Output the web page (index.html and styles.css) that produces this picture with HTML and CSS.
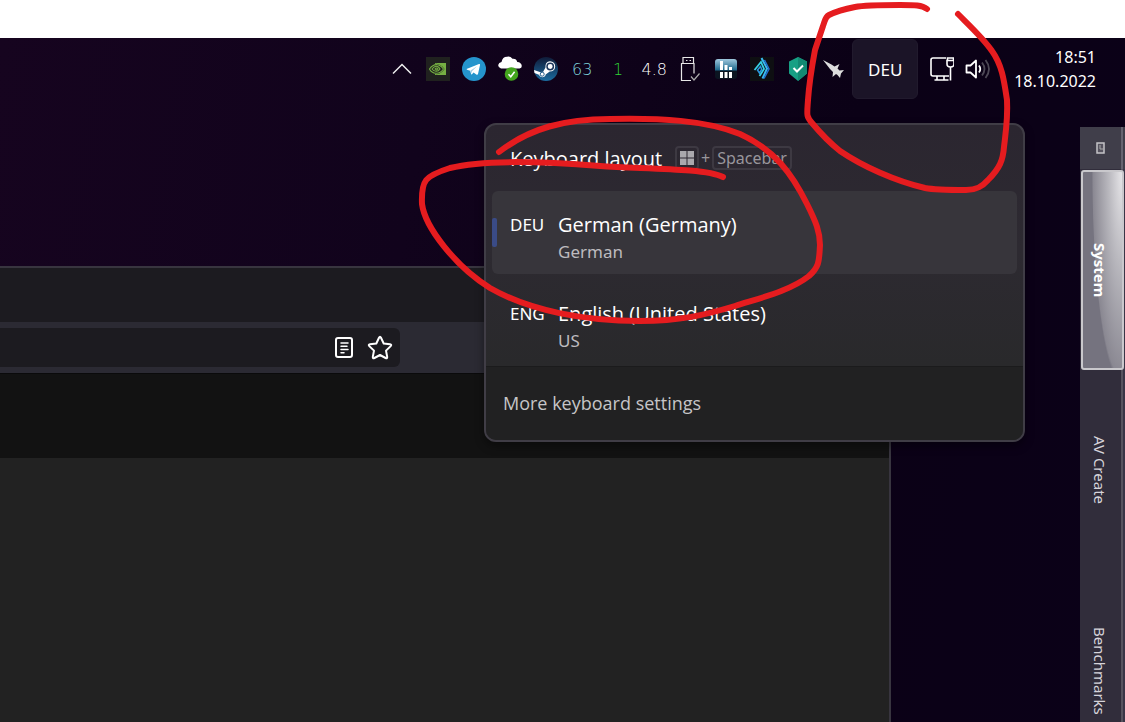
FILE: index.html
```html
<!DOCTYPE html>
<html lang="en">
<head>
  <meta charset="UTF-8" />
  <title>Keyboard layout</title>
  <link rel="stylesheet" href="styles.css">
</head>
<body>
  <main class="desktop">

    <!-- browser window -->
    <section class="window">
      <div class="titlebar"></div>
      <div class="toolbar">
        <div class="urlbar">
          <button class="url-btn" aria-label="Reader view">
            <svg width="24" height="24" viewBox="0 0 24 24" fill="none" stroke="#fff" stroke-width="2" stroke-linecap="round">
              <rect x="4" y="2" width="16" height="19" rx="2" />
              <path d="M9 7h7M9 10.300h6M9 13.500h7M9 16.700h3" stroke-width="1.500" />
            </svg>
          </button>
          <button class="url-btn" aria-label="Bookmark">
            <svg width="26" height="26" viewBox="0 0 26 26" fill="none" stroke="#fff" stroke-width="2" stroke-linejoin="round">
              <path d="M12 2.800q1-2 2 0l2.700 5.700 6.300.8q2 .4.700 1.800l-4.700 4.500 1.200 6.300q.2 2-1.600 1.100L13 20l-5.600 3q-1.800.9-1.600-1.100L7 15.600l-4.700-4.500Q1 9.700 3 9.300L9.300 8.500z" />
            </svg>
          </button>
        </div>
      </div>
      <div class="subheader"></div>
      <div class="content"></div>
    </section>

    <!-- system tray -->
    <header class="tray">
      <button class="tray-item" aria-label="Hidden icons">
        <svg width="20" height="12" viewBox="0 0 20 12" fill="none" stroke="#eee" stroke-width="1.500"><path d="M1 10.500L10 1.500l9 9" /></svg>
      </button>
      <button class="tray-item" aria-label="Nvidia">
        <svg width="24" height="24" viewBox="0 0 24 24">
          <rect width="24" height="24" fill="#20211f" />
          <path d="M9 6h11v12H9z" fill="#76b043" />
          <path d="M3 12q5-7 10-4.500 4 1.500 5.500 4.500-4 6-9 5Q5 16 3 12z" fill="#20211f" />
          <path d="M3.500 12q4-5.500 9-4 3 1 5 4-3 4.500-7.500 4.300Q5.500 16 3.500 12zM6 12q3-4 6-2.200 1.500 1 2 2.200-1.800 2.500-4 2.300Q7.500 14 6 12zM9 12q1.500-2 3 0-1.500 1.800-3 0z" fill="none" stroke="#76b043" stroke-width="1.100" />
        </svg>
      </button>
      <button class="tray-item" aria-label="Telegram">
        <svg width="24" height="24" viewBox="0 0 24 24">
          <circle cx="12" cy="12" r="12" fill="#2594cc" />
          <path d="M4.500 12L17 7q1.300-.4 1 1L16 17q-.4 1.300-1.700.5L11.500 15.500l-1.500 1.700q-.8.600-1-.5l-.8-3-3.200-.9z" fill="#fff" />
          <path d="M8.500 13.500L15 9.200l-5 5-.4 2.500z" fill="#a9cfe5" />
        </svg>
      </button>
      <button class="tray-item" aria-label="Cloud sync">
        <svg width="26" height="26" viewBox="0 0 26 26">
          <path d="M4 12.500q-3-.8-2.800-3.500.5-2.500 3.300-3Q5.500.8 10 .7q3.200-.8 5.500 2 4-.4 4.800 3.300 4 .3 4.500 4 0 2-2.300 2.500z" fill="#fff" />
          <circle cx="14.500" cy="18" r="6.800" fill="#43a51d" />
          <path d="M11.500 18.300l2.300 2.500 3.800-5" fill="none" stroke="#fff" stroke-width="1.500" />
        </svg>
      </button>
      <button class="tray-item" aria-label="Steam">
        <svg width="24" height="24" viewBox="0 0 24 24">
          <defs>
            <linearGradient id="steam" x1="0" y1="0" x2="0" y2="1">
              <stop offset="0" stop-color="#101b38" />
              <stop offset="1" stop-color="#1b6ca0" />
            </linearGradient>
          </defs>
          <circle cx="12" cy="12" r="12" fill="url(#steam)" />
          <path d="M0 13l6.500 2.200q1.200-.6 2.500-.2L11.500 10.500q-.5-5.800 4.500-6.200 5 .3 5.200 5.200-.4 5-5.500 5l-4 3q-.5 2.700-3.500 2.800-2.600-.2-3.300-2.500L.500 16z" fill="#fff" />
          <circle cx="16.200" cy="9.500" r="3.200" fill="#fff" stroke="#1b355b" stroke-width="1.500" />
          <circle cx="8.200" cy="17.200" r="2" fill="none" stroke="#205a8a" stroke-width="1" />
        </svg>
      </button>
      <span class="tray-item meter cyan">63</span>
      <span class="tray-item meter green">1</span>
      <span class="tray-item meter">4.8</span>
      <button class="tray-item" aria-label="Eject hardware">
        <svg width="20" height="26" viewBox="0 0 20 26" fill="none" stroke="#e8e8e8" stroke-width="1.200">
          <path d="M3 7.500V1.500h10.500v6M11 24.500H1.500v-17h12.500v10M6 4.500h1.500M9.500 4.500H11" />
          <path d="M11 20.500l3 3.500 5.500-6.500" stroke="#aaa" />
        </svg>
      </button>
      <button class="tray-item" aria-label="Resource monitor">
        <svg width="24" height="22" viewBox="0 0 24 22">
          <defs>
            <linearGradient id="mon" x1="0" y1="0" x2="0" y2="1">
              <stop offset="0" stop-color="#9fc8de" />
              <stop offset=".55" stop-color="#1f688c" />
              <stop offset=".6" stop-color="#0c1521" />
            </linearGradient>
          </defs>
          <rect x="1" y="1" width="22" height="20" rx="3" fill="url(#mon)" />
          <path d="M7.500 3v9M12 7v5M16.500 9v3" stroke="#fff" stroke-width="3" />
          <path d="M7.500 14v6M12 14v6M16.500 14v6" stroke="#fff" stroke-width="3" />
        </svg>
      </button>
      <button class="tray-item" aria-label="Armoury">
        <svg width="24" height="24" viewBox="0 0 24 24" fill="none">
          <rect width="24" height="24" fill="#0e0f12" />
          <path d="M11.500 1l5.500 10.500-4.500 10" stroke="#39b9ef" stroke-width="2" />
          <path d="M14.500 3l4.500 9-5 9.500" stroke="#236fd0" stroke-width="1.500" />
          <path d="M4.500 13L11 5l3 7-4.500 7" stroke="#36d0e4" stroke-width="1.800" />
          <path d="M7.500 13l3-3.500 1.200 3L9.500 16z" stroke="#2a96dc" stroke-width="1.500" />
        </svg>
      </button>
      <button class="tray-item" aria-label="Protection">
        <svg width="20" height="24" viewBox="0 0 20 24">
          <path d="M10 0l9 4.500v12L10 24l-9-7.500v-12z" fill="#17a084" />
          <path d="M10 0l9 4.500v12L10 24z" fill="#128a73" />
          <path d="M5.500 11l3.500 3.500L15 8.500" fill="none" stroke="#fff" stroke-width="2" />
        </svg>
      </button>
      <button class="tray-item" aria-label="Game">
        <svg width="22" height="20" viewBox="0 0 22 20">
          <path d="M0 1l8.500 4.500 3 2L16.500 5 14.500 9.500l2 2 4.500-.5-3 3.500-1 4.500-2.500-3-1.500-1-3.500 3 .5-5-3-3z" fill="#ddd" />
        </svg>
      </button>
      <button class="lang-btn">DEU</button>
      <button class="quick" aria-label="Network and volume">
        <svg width="24" height="26" viewBox="0 0 24 26" fill="none" stroke="#fff" stroke-width="1.600">
          <path d="M16 2H3Q1 2 1 4v14q0 2 2 2h16M7 20v3.500M14 20v3.500M4.500 24h14M20.500 11v13.500" />
          <path d="M17.500 4V2h6v2M17 4.500h7V8q0 3-3.500 3-3.500 0-3.500-3z" />
        </svg>
        <svg width="26" height="22" viewBox="0 0 26 22" fill="none" stroke="#fff" stroke-width="1.800" stroke-linejoin="round">
          <path d="M1.500 7.500h4l5.500-5v17l-5.500-5h-4z" />
          <path d="M14 7.500q2.500 3.500 0 7" />
          <path d="M17 4.500q5 6.500 0 13M20.500 2q7 9 0 18" stroke="#4d4855" />
        </svg>
      </button>
      <time class="clock" datetime="2022-10-18T18:51">18:51<br>18.10.2022</time>
    </header>

    <!-- language flyout -->
    <section class="flyout">
      <div class="flyout-head">
        <h1>Keyboard layout</h1>
        <kbd>
          <svg width="14" height="14" viewBox="0 0 14 14" fill="#aaa8ad"><path d="M0 0h6.500v6.500H0zM7.500 0H14v6.500H7.500zM0 7.500h6.500V14H0zM7.500 7.500H14V14H7.500z" /></svg>
        </kbd>
        <span class="plus">+</span>
        <kbd>Spacebar</kbd>
      </div>
      <button class="layout selected">
        <span class="code">DEU</span>
        <span class="names"><span class="lang">German (Germany)</span><span class="sub">German</span></span>
      </button>
      <button class="layout">
        <span class="code">ENG</span>
        <span class="names"><span class="lang">English (United States)</span><span class="sub">US</span></span>
      </button>
      <a class="more" href="#">More keyboard settings</a>
    </section>

    <!-- side dock -->
    <nav class="dock">
      <button class="dock-head" aria-label="Dock menu">
        <svg width="10" height="12" viewBox="0 0 10 12" fill="none"><rect x="1" y="1" width="7" height="10" fill="#55525e" stroke="#c4c3c7" stroke-width="1.500" /><path d="M4 3v4h3" stroke="#aaa" /></svg>
      </button>
      <button class="tab active">System</button>
      <button class="tab">AV Create</button>
      <button class="tab">Benchmarks</button>
    </nav>
  </main>

  <!-- marker strokes -->
  <svg class="marks" width="1125" height="722" viewBox="0 0 1125 722" fill="none" stroke="#e51c1f" stroke-width="6" stroke-linecap="round" stroke-linejoin="round">
    <path d="M927 9C922 5 915 5 900 5C880 5 865 5 855 7C845 9 835 12 829 15C825 17 825 21 823 26L815 50C812 66 809 85 808 100C807 115 806 116 812 123C822 135 830 143 840 151C862 166 895 181 925 188C935 190 950 190 966 190C976 190 982 187 988 180C1000 168 1003 160 1004 147C1006 130 1008 118 1007 100C1004 80 1002 65 992 51C984 39 970 26 958 14" />
    <path d="M499 152C530 128 565 119 610 119C660 118 705 120 740 134C775 150 792 174 807 204C816 222 820 232 820 245C819 260 820 266 809 276C790 291 760 298 735 306C705 315 680 321 640 321C585 321 530 311 490 288C455 266 425 227 422 204C421 180 425 176 450 168C485 159 550 162 600 166C645 169 705 168 723 177" />
  </svg>
</body>
</html>
```
FILE: styles.css
```css
* {
  box-sizing: border-box;
}

body {
  margin: 0;
  padding-top: 38px;
  background: #fff;
  color: #fff;
  font-family: "Noto Sans", "Open Sans", sans-serif;
  position: relative;
  overflow: hidden;
}

button {
  font: inherit;
  color: inherit;
  background: none;
  border: none;
  padding: 0;
  cursor: pointer;
}

svg {
  display: block;
  flex: none;
}

.desktop {
  position: relative;
  height: calc(100vh - 38px);
  overflow: hidden;
  background: linear-gradient(100deg, #16041f 0%, #11031c 35%, #0b0116 70%, #0b0118 100%);
}

/* tray */
.tray {
  position: relative;
  display: flex;
  justify-content: flex-end;
  align-items: center;
  height: 62px;
  padding-right: 29px;
}

.tray-item {
  width: 36px;
  height: 36px;
  display: flex;
  align-items: center;
  justify-content: center;
}

.meter {
  font-family: "DejaVu Sans", sans-serif;
  font-weight: 200;
  font-size: 16px;
}

.cyan {
  color: #7fd3dc;
}

.green {
  color: #2ed336;
}

.lang-btn {
  width: 66px;
  height: 60px;
  border: 1px solid #211a2d;
  border-radius: 6px;
  background: #1b1427;
  font-size: 17px;
}

.quick {
  display: flex;
  align-items: center;
  gap: 11px;
  margin: 0 23px 0 12px;
}

.clock {
  font-size: 16px;
  line-height: 24px;
  text-align: right;
}

/* browser window */
.window {
  position: absolute;
  left: 0;
  right: 234px;
  top: 228px;
  bottom: 0;
  display: flex;
  flex-direction: column;
  border: solid #38353f;
  border-width: 2px 2px 0 0;
}

.titlebar {
  height: 54px;
  background: #1c1b20;
}

.toolbar {
  height: 51px;
  padding: 6px 0 5px;
  background: #2b2a33;
}

.urlbar {
  width: 400px;
  height: 39px;
  display: flex;
  align-items: center;
  justify-content: flex-end;
  gap: 11px;
  padding-right: 7px;
  border-radius: 0 6px 6px 0;
  background: #1c1b20;
}

.subheader {
  height: 85px;
  border-top: 1px solid #0a0a0b;
  background: #121212;
}

.content {
  flex: 1;
  background: #222;
}

/* flyout */
.flyout {
  position: absolute;
  top: 85px;
  right: 100px;
  width: 541px;
  border: 2px solid #403d46;
  border-radius: 12px;
  overflow: hidden;
  background: linear-gradient(#2b2630, #2d2a31 40%, #29292b 76%);
  box-shadow: 0 4px 10px rgba(0, 0, 0, 0.4);
}

.flyout-head {
  display: flex;
  align-items: center;
  height: 66px;
  padding-left: 24px;
}

.flyout-head h1 {
  margin: 0 13px 0 0;
  font-family: "Open Sans", sans-serif;
  font-size: 20px;
  font-weight: 400;
}

kbd {
  display: flex;
  align-items: center;
  height: 24px;
  padding: 0 3px;
  border: 2px solid #3d3942;
  border-radius: 4px;
  color: #99969c;
  font-family: inherit;
  font-size: 16px;
}

.plus {
  padding: 0 2px;
  color: #99969c;
  font-size: 16px;
}

.layout {
  display: flex;
  width: calc(100% - 12px);
  height: 83px;
  margin: 0 6px;
  padding: 19px 0 0 18px;
  position: relative;
  border-radius: 6px;
  text-align: left;
}

.layout.selected {
  margin-bottom: 6px;
  background: #37353b;
}

.layout.selected::before {
  content: "";
  position: absolute;
  left: 0;
  top: 27px;
  width: 5px;
  height: 29px;
  border-radius: 2px;
  background: #3a4b87;
}

.code {
  width: 48px;
  font-size: 17px;
  line-height: 29px;
}

.names {
  display: flex;
  flex-direction: column;
}

.lang {
  font-family: "Open Sans", sans-serif;
  font-size: 20px;
  line-height: 29px;
}

.sub {
  color: #bdbbbf;
  font-size: 17px;
  line-height: 25px;
}

.more {
  display: block;
  margin-top: 3px;
  padding-left: 17px;
  border-top: 1px solid #1b1b1c;
  background: #212122;
  color: #c6c5c7;
  font-family: "Open Sans", sans-serif;
  font-size: 18px;
  line-height: 73px;
  text-decoration: none;
}

/* dock */
.dock {
  position: absolute;
  top: 89px;
  right: 0;
  width: 45px;
  display: flex;
  flex-direction: column;
  gap: 1px;
  background: linear-gradient(90deg, #312d3b 0 41px, #57545f 41px 43px, #3a3647 43px);
}

.dock-head {
  height: 42px;
  display: flex;
  align-items: center;
  justify-content: center;
  padding-right: 4px;
  background: linear-gradient(90deg, #403e4a 0 41px, #666470 41px 43px, #403e4a 43px);
}

.tab {
  height: 199px;
  padding-right: 5px;
  color: #d6d4da;
  font-size: 15px;
  writing-mode: vertical-rl;
}

.tab.active {
  height: 200px;
  margin: 0 1px;
  border: 2px solid #c9c8cc;
  border-radius: 3px;
  background: radial-gradient(ellipse 30px 210px at 100% 0, #e6e5e8, #b9b8be 45%, #8a8892 97%, transparent 100%), #75737f;
  color: #fff;
  font-weight: bold;
}

/* marker */
.marks {
  position: absolute;
  top: 0;
  right: 0;
  pointer-events: none;
}
```
